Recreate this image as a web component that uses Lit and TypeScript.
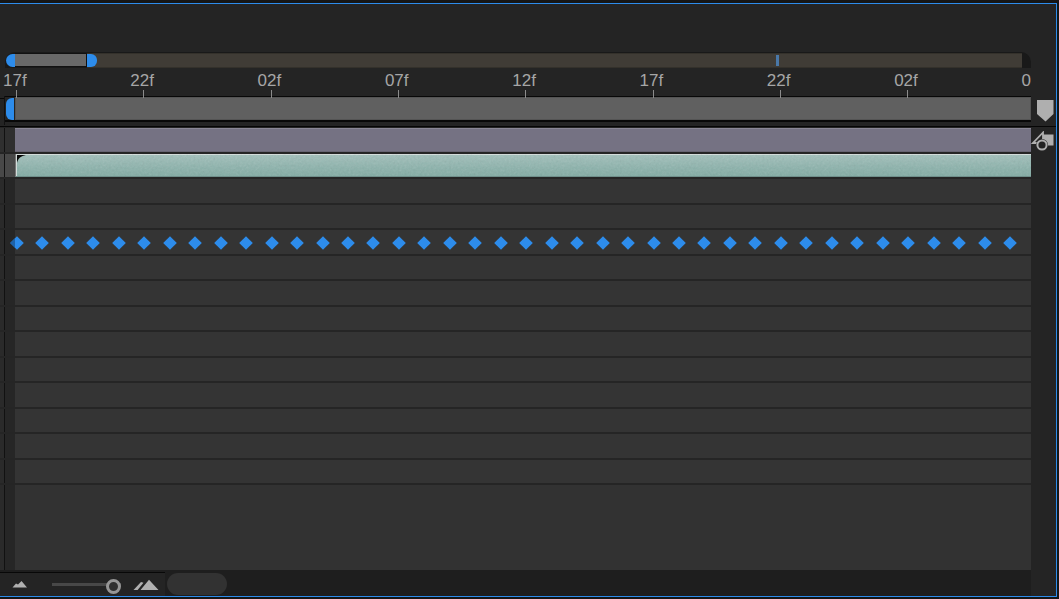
import { LitElement, html, css, svg } from "lit";
import { customElement, property, state } from "lit/decorators.js";

const FRAME_PERCENT = 2.506;
const LABELS = ["17f", "22f", "02f", "07f", "12f", "17f", "22f", "02f", "0"];
const KEYFRAMES = Array.from({ length: 40 }, (_, i) => i);
const PROPERTY_ROWS = Array.from({ length: 12 }, (_, i) => i);
const KEYED_ROW = 2;

@customElement("time-navigator")
class TimeNavigator extends LitElement {
  static styles = css`
    :host {
      display: flex;
      height: 16px;
      padding-left: 5px;
    }
    .bar {
      display: flex;
      flex: 1;
      box-sizing: border-box;
      padding: 1px 9px 0 1px;
      border-radius: 10px 10px 0 0;
      background: #191919;
    }
    .handle {
      width: 10px;
      height: 13px;
      margin: 1px 0 0;
      padding: 0;
      border: 0;
      background: #2d8ceb;
    }
    .start {
      width: 9px;
      border-radius: 7px 0 0 7px;
    }
    .end {
      position: relative;
      border-radius: 0 6px 6px 0;
    }
    .window {
      box-sizing: border-box;
      width: 71px;
      height: 14px;
      border: 1px solid #111;
      border-width: 1px 1px 1px 0;
      background: #686868;
    }
    .window {
      width: 7.1%;
    }
    .track {
      display: flex;
      flex: 1;
      box-sizing: border-box;
      height: 15px;
      margin-left: -10px;
      padding-left: 10px;
      border: 1px solid #34312b;
      border-width: 1px 0;
      background: #403c36;
    }
    .time {
      width: 3px;
      height: 11px;
      margin: 1px 0 0 73.4%;
      background: #4a78a8;
    }
  `;
  render() {
    return html`<div class="bar">
      <button class="handle start" aria-label="Time navigator start"></button>
      <div class="window"></div>
      <button class="handle end" aria-label="Time navigator end"></button>
      <div class="track"><div class="time"></div></div>
    </div>`;
  }
}

@customElement("time-ruler")
class TimeRuler extends LitElement {
  static styles = css`
    :host {
      display: block;
      height: 30px;
      margin: 0 0 -2px 3px;
      overflow: hidden;
    }
    .scale {
      position: relative;
      z-index: 1;
      height: 30px;
      margin-left: 12px;
    }
    .mark {
      position: absolute;
      top: 3px;
      display: flex;
      flex-direction: column;
      width: 24px;
      margin-left: -12px;
      color: #a6a6a6;
      font-size: 17px;
      line-height: 19px;
    }
    .tick {
      width: 1px;
      height: 8px;
      margin-left: 13px;
      background: #8c8c8c;
    }
  `;
  render() {
    return html`<div class="scale">
      ${LABELS.map(
        (label, i) => html`<div class="mark" style="left:${(i * 5 * FRAME_PERCENT).toFixed(3)}%">
          <span>${label}</span><span class="tick"></span>
        </div>`
      )}
    </div>`;
  }
}

@customElement("keyframe-track")
class KeyframeTrack extends LitElement {
  static styles = css`
    :host {
      display: block;
      position: relative;
      height: 100%;
    }
    .key {
      position: absolute;
      top: 6px;
      width: 14px;
      height: 14px;
      margin-left: -5px;
      padding: 0;
      border: 0;
      background: none;
    }
    svg {
      display: block;
    }
  `;
  render() {
    return KEYFRAMES.map(
      (i) => html`<button
        class="key"
        aria-label="Keyframe ${i + 1}"
        style="left:${(i * FRAME_PERCENT).toFixed(3)}%"
      >
        <svg width="14" height="14" viewBox="0 0 14 14">
          <path d="M7 .2 13.8 7 7 13.8 .2 7Z" fill="#2d8ceb" />
          ${i === 0 ? svg`<path d="M5 2.2V11.8L.2 7Z" fill="#1d62a9"/>` : ""}
        </svg>
      </button>`
    );
  }
}

@customElement("layer-rows")
class LayerRows extends LitElement {
  static styles = css`
    :host {
      display: flex;
      flex: 1;
      flex-direction: column;
      min-height: 0;
    }
    .row {
      display: grid;
      grid-template-columns: 4px 1px 10px 1fr;
      box-sizing: border-box;
      border-bottom: 2px solid #252525;
    }
    .edge {
      background: #111;
    }
    .gutter {
      background: #2a2a2a;
    }
    .lead {
      background: #262626;
    }
    .layer {
      height: 26px;
    }
    .layer .lead,
    .layer .gutter {
      background: #2f2f2f;
    }
    .selected {
      height: 25px;
    }
    .selected .lead,
    .selected .gutter {
      background: #484848;
    }
    .solid {
      box-sizing: border-box;
      border: 1px solid #8a8796;
      border-width: 1px 0;
      border-bottom-color: #686573;
      background: #757283;
    }
    .clip {
      position: relative;
      overflow: hidden;
      box-sizing: border-box;
      border-left: 1px solid #777;
      border-bottom: 1px solid #6f8f8a;
      box-shadow: inset 1px 1px #d5dfdd;
      background: linear-gradient(#a3c1bc, #8bb2ab 65%, #82aca4);
    }
    .grain {
      display: block;
      width: 100%;
      height: 100%;
      opacity: 0.2;
    }
    .corner {
      position: absolute;
      top: 1px;
      left: 1px;
    }
    .properties {
      display: grid;
      grid-auto-rows: 1fr;
      height: 306px;
    }
    .property .lane {
      background: #343434;
    }
    .rest {
      flex: 1;
      border: 0;
    }
    .rest .lane {
      background: #323232;
    }
  `;
  render() {
    return html`
      <div class="row layer">
        <div class="gutter"></div><div class="edge"></div><div class="lead"></div>
        <div class="solid"></div>
      </div>
      <div class="row layer selected">
        <div class="gutter"></div><div class="edge"></div><div class="lead"></div>
        <div class="clip">
          <svg class="grain" aria-hidden="true">
            <filter id="noise">
              <feTurbulence type="fractalNoise" baseFrequency="0.45" numOctaves="2" />
              <feColorMatrix type="saturate" values="0" />
            </filter>
            <rect width="100%" height="100%" filter="url(#noise)" />
          </svg>
          <svg class="corner" width="9" height="8" viewBox="0 0 9 8">
            <path d="M0 0H9C4 1 1 3 0 8Z" fill="#080808" />
          </svg>
        </div>
      </div>
      <div class="properties">
        ${PROPERTY_ROWS.map(
          (i) => html`<div class="row property">
            <div class="gutter"></div><div class="edge"></div><div class="lead"></div>
            <div class="lane">
              ${i === KEYED_ROW ? html`<keyframe-track></keyframe-track>` : ""}
            </div>
          </div>`
        )}
      </div>
      <div class="row rest">
        <div class="gutter"></div><div class="edge"></div><div class="lead"></div>
        <div class="lane"></div>
      </div>
    `;
  }
}

@customElement("zoom-bar")
class ZoomBar extends LitElement {
  @state() zoom = 100;
  static styles = css`
    :host {
      display: flex;
      height: 26px;
      background: #1e1e1e;
    }
    .controls {
      display: flex;
      align-items: center;
      box-sizing: border-box;
      width: 165px;
      margin-top: 2px;
      padding-left: 12px;
      border-top: 1px solid #080808;
      background: #242424;
    }
    button {
      padding: 0;
      border: 0;
      background: none;
    }
    .out {
      margin-bottom: 2px;
    }
    svg {
      display: block;
    }
    input {
      appearance: none;
      width: 69px;
      height: 16px;
      margin: 4px 12px 0 24px;
      background: linear-gradient(#484848, #484848) 0 4px / 100% 3px no-repeat;
    }
    input::-webkit-slider-thumb {
      appearance: none;
      box-sizing: border-box;
      width: 15px;
      height: 15px;
      border: 3px solid #969696;
      border-radius: 50%;
      background: #303030;
    }
    .scroll {
      width: 60px;
      height: 22px;
      margin: 3px 0 0 2px;
      border-radius: 11px;
      background: #323232;
    }
  `;
  render() {
    return html`<div class="controls">
        <button class="out" aria-label="Zoom out">
          <svg width="16" height="8" viewBox="0 0 16 8">
            <path d="M.5 7.5 4 3.5 6 4.5 9.5 1 15 7.5Z" fill="#b0b0b0" />
          </svg>
        </button>
        <input
          type="range"
          aria-label="Zoom level"
          .value=${String(this.zoom)}
          @input=${(e: Event) => (this.zoom = Number((e.target as HTMLInputElement).value))}
        />
        <button aria-label="Zoom in">
          <svg width="26" height="12" viewBox="0 0 26 12">
            <path d="M7.5 11 16 .8 25.5 11Z M.5 11 8 3 10.5 3.8 4.6 11Z" fill="#b0b0b0" />
          </svg>
        </button>
      </div>
      <div class="scroll"></div>`;
  }
}

@customElement("app-root")
class AppRoot extends LitElement {
  @property() label = "Timeline";
  static styles = css`
    :host {
      display: block;
      box-sizing: border-box;
      height: 100vh;
      padding: 3px 2px 2px 0;
      background: #161616;
      font-family: "Liberation Sans", Arial, sans-serif;
    }
    .panel {
      display: flex;
      box-sizing: border-box;
      height: 100%;
      border: 1px solid #2d8ceb;
      border-left: 0;
      background: #242424;
    }
    .main {
      display: flex;
      flex: 1;
      flex-direction: column;
      min-width: 0;
      padding-top: 48px;
    }
    .area {
      display: grid;
      grid-template-columns: 4px 1px 1fr;
      height: 29px;
    }
    .stub {
      height: 1px;
      margin-top: 2px;
      background: #080808;
    }
    .edge {
      background: #111;
    }
    .work {
      display: flex;
      box-sizing: border-box;
      height: 26px;
      border: solid #080808;
      border-width: 1px 0 2px;
    }
    .grip {
      width: 8px;
      margin: 1px 1px 0;
      padding: 0;
      border: 0;
      border-radius: 6px 0 0 6px;
      background: #2d8ceb;
    }
    .span {
      flex: 1;
      box-sizing: border-box;
      border: 1px solid #545454;
      background: #606060;
    }
    .rule {
      height: 2px;
      margin-top: 1px;
      background: linear-gradient(#060606 50%, #242424 50%);
    }
    .side {
      display: flex;
      flex-direction: column;
      width: 25px;
      padding-top: 96px;
    }
    .side button {
      padding: 0;
      border: 0;
      background: none;
    }
    .side .marker {
      height: 22px;
      padding-left: 6px;
    }
    .line {
      height: 1px;
      margin: 4px 0;
      background: #060606;
    }
    svg {
      display: block;
    }
  `;
  render() {
    return html`<section class="panel" aria-label=${this.label}>
      <div class="main">
        <time-navigator></time-navigator>
        <time-ruler></time-ruler>
        <div class="area">
          <div class="stub"></div>
          <div class="edge"></div>
          <div class="work">
            <button class="grip" aria-label="Work area start"></button>
            <div class="span"></div>
          </div>
        </div>
        <div class="rule"></div>
        <layer-rows></layer-rows>
        <zoom-bar></zoom-bar>
      </div>
      <div class="side">
        <button class="marker" aria-label="Composition marker bin">
          <svg width="17" height="22" viewBox="0 0 17 22">
            <path d="M0 0H16.5V14L8.5 21.5 0 14Z" fill="#afafaf" />
          </svg>
        </button>
        <div class="line"></div>
        <button aria-label="Composition button">
          <svg width="23" height="20" viewBox="0 0 23 20">
            <path d="M11.5 3.5H22.5V14.5H11.5Z" fill="#afafaf" />
            <path
              d="M12 1.5 2 12H12Z"
              fill="#242424"
              stroke="#afafaf"
              stroke-width="1.8"
            />
            <circle cx="11" cy="14" r="6" fill="#242424" />
            <circle cx="11" cy="14" r="4.6" fill="#242424" stroke="#afafaf" stroke-width="2" />
          </svg>
        </button>
      </div>
    </section>`;
  }
}
